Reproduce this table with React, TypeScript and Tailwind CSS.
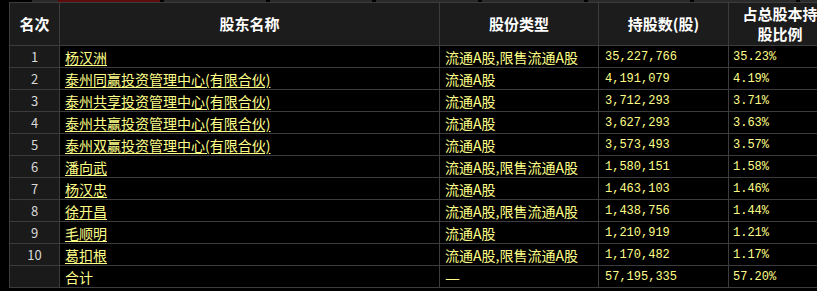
import React from 'react'

const rows = [
  { rank: '1', name: '杨汉洲', type: '流通A股,限售流通A股', shares: '35,227,766', pct: '35.23%' },
  { rank: '2', name: '泰州同赢投资管理中心(有限合伙)', type: '流通A股', shares: '4,191,079', pct: '4.19%' },
  { rank: '3', name: '泰州共享投资管理中心(有限合伙)', type: '流通A股', shares: '3,712,293', pct: '3.71%' },
  { rank: '4', name: '泰州共赢投资管理中心(有限合伙)', type: '流通A股', shares: '3,627,293', pct: '3.63%' },
  { rank: '5', name: '泰州双赢投资管理中心(有限合伙)', type: '流通A股', shares: '3,573,493', pct: '3.57%' },
  { rank: '6', name: '潘向武', type: '流通A股,限售流通A股', shares: '1,580,151', pct: '1.58%' },
  { rank: '7', name: '杨汉忠', type: '流通A股', shares: '1,463,103', pct: '1.46%' },
  { rank: '8', name: '徐开昌', type: '流通A股,限售流通A股', shares: '1,438,756', pct: '1.44%' },
  { rank: '9', name: '毛顺明', type: '流通A股', shares: '1,210,919', pct: '1.21%' },
  { rank: '10', name: '葛扣根', type: '流通A股,限售流通A股', shares: '1,170,482', pct: '1.17%' },
]

const cjk = "font-['Noto_Sans_CJK_SC',sans-serif]"
const mono = "font-['Liberation_Mono','Noto_Sans_CJK_SC',monospace]"

const cell = 'border border-[#3c3c3c] py-0 pr-0 leading-[20px] whitespace-nowrap'

export default function App() {
  return (
    <div className="w-[817px] h-[291px] bg-black overflow-hidden">
      {/* tab strip */}
      <div className="flex h-[2px]">
        <div className="w-[32px] shrink-0" />
        <div className="w-[26px] shrink-0 bg-[#2a2a2a]" />
        <div className="w-[102px] shrink-0 bg-[#5c0c0c]" />
        {[0, 1, 2, 3, 4, 5, 6].map((i) => (
          <div key={i} className="ml-[4px] w-[102px] shrink-0 bg-[#2a2a2a]" />
        ))}
      </div>

      <table className={`ml-[9px] table-fixed border-collapse w-[822px] ${cjk}`}>
        <colgroup>
          <col className="w-[50px]" />
          <col className="w-[380px]" />
          <col className="w-[159px]" />
          <col className="w-[130px]" />
          <col className="w-[103px]" />
        </colgroup>
        <thead>
          <tr className="h-[43px] bg-[#1c1c1c] text-white text-[15px] font-bold leading-[20px]">
            <th className="border border-[#3c3c3c] text-center">名次</th>
            <th className="border border-[#3c3c3c] text-center">股东名称</th>
            <th className="border border-[#3c3c3c] text-center">股份类型</th>
            <th className="border border-[#3c3c3c] text-center">持股数(股)</th>
            <th className="border border-[#3c3c3c] text-center px-[12px]">占总股本持股比例</th>
          </tr>
        </thead>
        <tbody className="text-[14px] text-[#ffff88] font-normal">
          {rows.map((r) => (
            <tr key={r.rank} className="h-[22px]">
              <td className={`${cell} pl-0 bg-[#1a1a1a] text-center text-[#d8d8d8] text-[13px]`}>
                {r.rank}
              </td>
              <td className={`${cell} pl-[5px]`}>
                <span className="underline underline-offset-[2px]">{r.name}</span>
              </td>
              <td className={`${cell} pl-[5px]`}>{r.type}</td>
              <td className={`${cell} pl-[6px] text-[12px] ${mono}`}>{r.shares}</td>
              <td className={`${cell} pl-[4px] text-[12px] ${mono}`}>{r.pct}</td>
            </tr>
          ))}
          <tr className="h-[22px]">
            <td className={`${cell} pl-0 bg-[#1a1a1a]`} />
            <td className={`${cell} pl-[5px]`}>合计</td>
            <td className={`${cell} pl-[5px]`}>
              <span className="inline-block origin-left scale-x-[1.2]">—</span>
            </td>
            <td className={`${cell} pl-[6px] text-[12px] ${mono}`}>57,195,335</td>
            <td className={`${cell} pl-[4px] text-[12px] ${mono}`}>57.20%</td>
          </tr>
        </tbody>
      </table>
    </div>
  )
}
